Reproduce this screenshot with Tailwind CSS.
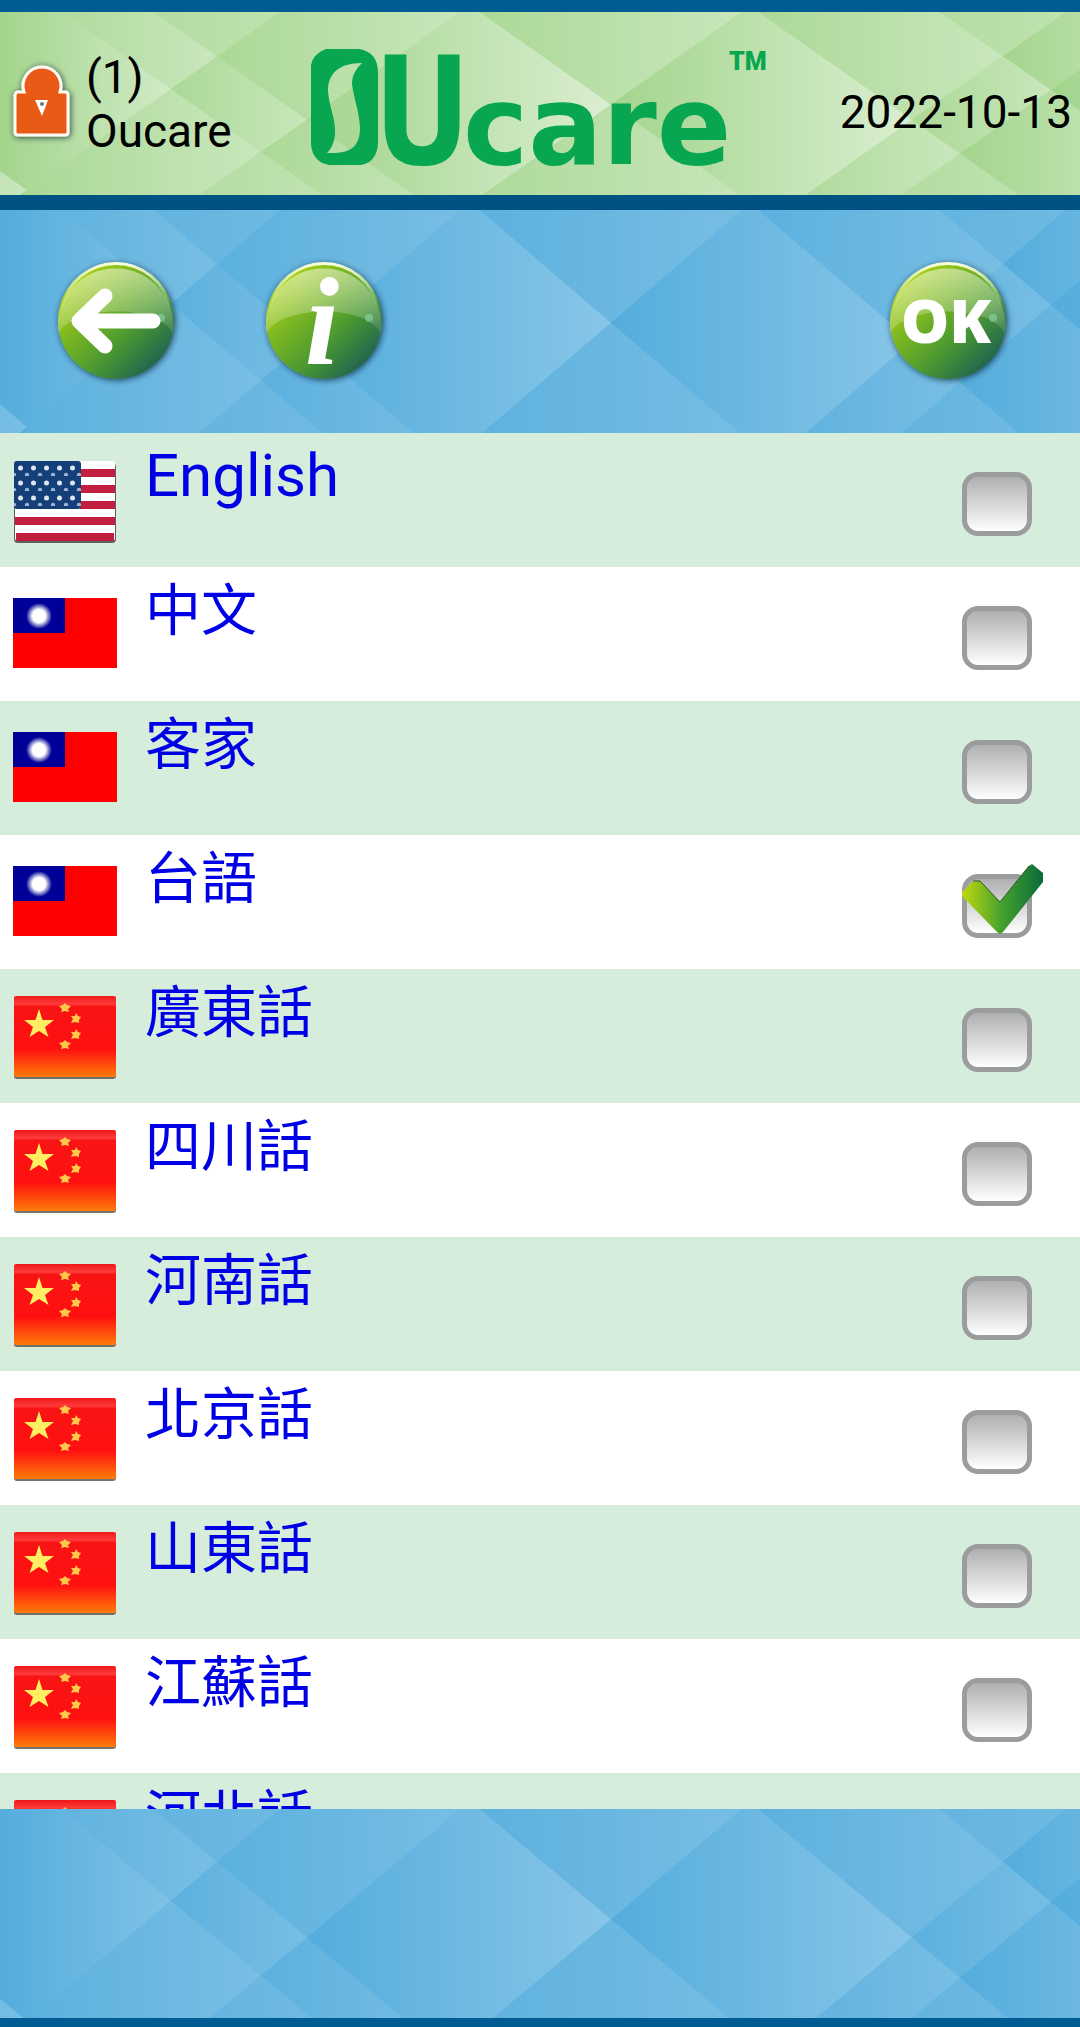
<!DOCTYPE html>
<html lang="zh-Hant">
<head>
<meta charset="utf-8">
<meta name="viewport" content="width=device-width, initial-scale=1">
<title>Oucare</title>
<script src="https://cdn.jsdelivr.net/npm/@tailwindcss/browser@4"></script>
</head>
<body class="flex h-screen flex-col overflow-hidden bg-white font-[Roboto,'Noto_Sans_CJK_TC',sans-serif] text-black">

<!-- Shared drawings -->
<svg class="absolute size-0" aria-hidden="true">
  <defs>
    <linearGradient id="wide"><stop offset="0" stop-color="#fff" stop-opacity="0"/><stop offset="1" stop-color="#fff"/></linearGradient>
    <linearGradient id="narrow"><stop offset="0" stop-color="#fff" stop-opacity=".15"/><stop offset="1" stop-color="#fff" stop-opacity=".7"/></linearGradient>
    <linearGradient id="edge" gradientUnits="userSpaceOnUse" x1="0" y1="0" x2="171" y2="0"><stop offset="0" stop-color="#fff" stop-opacity="0"/><stop offset="1" stop-color="#fff" stop-opacity=".85"/></linearGradient>
    <linearGradient id="glass" x1="0" y1="0" x2="1" y2="1"><stop offset=".15" stop-color="#a6d016"/><stop offset=".6" stop-color="#4c9a30"/><stop offset=".88" stop-color="#1f6152"/></linearGradient>
    <linearGradient id="shine" x1=".4" y1="0" x2=".6" y2="1"><stop offset="0" stop-color="#fff" stop-opacity=".5"/><stop offset="1" stop-color="#fff" stop-opacity=".12"/></linearGradient>
    <linearGradient id="rim" x1="0" y1="0" x2="0" y2="1"><stop offset="0" stop-color="#f8ffd8"/><stop offset="1" stop-color="#f8ffd8" stop-opacity="0"/></linearGradient>
    <linearGradient id="cnred" x1="0" y1="0" x2="0" y2="1"><stop offset="0" stop-color="#f01818"/><stop offset=".1" stop-color="#ff3b3b"/><stop offset=".13" stop-color="#f81414"/><stop offset=".65" stop-color="#ff1010"/><stop offset="1" stop-color="#ff7c08"/></linearGradient>
    <linearGradient id="tick" x1="0" y1="0" x2="1" y2="0"><stop offset="0" stop-color="#c0d810"/><stop offset=".5" stop-color="#43a02e"/><stop offset="1" stop-color="#0a6b3a"/></linearGradient>
    <radialGradient id="sun"><stop offset=".5" stop-color="#fff"/><stop offset="1" stop-color="#fff" stop-opacity="0"/></radialGradient>
    <pattern id="stars" width="13" height="15" patternUnits="userSpaceOnUse" x="1" y="1"><circle cx="6.500" cy="7" r="2.500" fill="#dde6f2"/><circle cx="0" cy="14" r="2.200" fill="#9fb4d4"/><circle cx="13" cy="14" r="2.200" fill="#9fb4d4"/></pattern>
    <filter id="drop" x="-20%" y="-20%" width="140%" height="150%"><feDropShadow dx="1" dy="1" stdDeviation="3" flood-color="#123" flood-opacity=".8"/></filter>

    <symbol id="diamonds" viewBox="0 0 1080 190" preserveAspectRatio="none">
      <polygon fill="url(#edge)" points="-113,82 31,-23 171,80 27,185"/>
      <polygon fill="url(#narrow)" points="27,185 171,80 261,145 117,250"/>
      <polygon fill="url(#narrow)" points="-113,82 27,185 -113,280"/>
      <polygon fill="url(#edge)" points="27,185 117,250 -20,250"/>
      <polygon fill="url(#narrow)" points="117,250 261,145 402,248 258,353"/>
      <polygon fill="url(#narrow)" points="31,-23 77,-56 217,46 171,80"/>
      <polygon fill="url(#narrow)" points="171,80 217,46 307,112 261,145"/>
      <polygon fill="url(#narrow)" points="261,145 307,112 448,215 402,248"/>
      <polygon fill="url(#narrow)" points="77,-56 240,-175 380,-73 217,46"/>
      <polygon fill="url(#narrow)" points="217,46 380,-73 470,-7 307,112"/>
      <polygon fill="url(#wide)" points="307,112 470,-7 611,96 448,215"/>
      <polygon fill="url(#narrow)" points="448,215 611,96 773,214 610,333"/>
      <polygon fill="url(#narrow)" points="470,-7 609,-109 750,-6 611,96"/>
      <polygon fill="url(#wide)" points="611,96 750,-6 912,112 773,214"/>
      <polygon fill="url(#narrow)" points="773,214 912,112 960,147 821,249"/>
      <polygon fill="url(#narrow)" points="821,249 960,147 1129,271 990,372"/>
      <polygon fill="url(#narrow)" points="750,-6 841,-72 1003,46 912,112"/>
      <polygon fill="url(#narrow)" points="912,112 1003,46 1051,81 960,147"/>
      <polygon fill="url(#wide)" points="960,147 1051,81 1220,204 1129,271"/>
      <polygon fill="url(#narrow)" points="841,-72 1021,-204 1183,-86 1003,46"/>
      <polygon fill="url(#wide)" points="1003,46 1183,-86 1231,-51 1051,81"/>
      <polygon fill="url(#wide)" points="1051,81 1231,-51 1400,73 1220,204"/>
    </symbol>

    <symbol id="orb" viewBox="0 0 136 136">
      <circle cx="68" cy="67" r="58" fill="url(#glass)" filter="url(#drop)"/>
      <path d="M10 80A58 58 0 1 1 125 80C113 50 24 50 10 80Z" fill="url(#shine)"/>
      <path d="M14 54A55 55 0 0 1 122 54" fill="none" stroke="url(#rim)" stroke-width="3"/>
      <circle cx="113" cy="64" r="4" fill="#8fe0b0" opacity=".5"/>
    </symbol>

    <symbol id="us" viewBox="0 0 104 84">
      <rect x="1" y="3" width="102" height="80" rx="4" fill="#3a3035" opacity=".75"/>
      <rect x="2" y="1" width="100" height="80" rx="3" fill="#fff"/>
      <path stroke="#c01f40" stroke-width="8" d="M67 13H102M67 29H102M67 45H102M2 61H102M3 77H101"/>
      <rect x="1" y="1" width="67" height="48" rx="3" fill="#143f78"/>
      <rect x="1" y="1" width="67" height="48" fill="url(#stars)"/>
    </symbol>
    <symbol id="tw" viewBox="0 0 104 84">
      <rect y="4" width="104" height="70" fill="#fe0000"/>
      <rect y="4" width="52" height="35" fill="#000098"/>
      <circle cx="26" cy="22" r="13" fill="url(#sun)"/>
    </symbol>
    <symbol id="cn" viewBox="0 0 104 84">
      <rect x="1" y="3" width="102" height="80" rx="3" fill="#55504a" opacity=".8"/>
      <rect x="1" y="0" width="102" height="81" rx="2" fill="url(#cnred)"/>
      <path fill="#ffee62" d="M26 13L29.500 24H41L32 31L35.500 41L26 35L16.500 41L20 31L11 24H22.500Z"/>
      <g fill="#ffc84a"><path d="M52 7l2 2 4 1-3 3 1 3-4-1-4 1 1-3-3-3 4-1Z"/><path d="M63 17l2 3 3 1-2 3 0 3-4-1-4 1 2-4-2-3 4 0Z"/><path d="M63 33l2 3 3 1-2 3 0 3-4-1-4 1 2-4-2-3 4 0Z"/><path d="M52 44l2 2 4 1-3 3 1 3-4-1-4 1 1-3-3-3 4-1Z"/></g>
    </symbol>
  </defs>
</svg>

<header class="relative flex h-[210px] shrink-0 items-center justify-between overflow-hidden border-t-[12px] border-b-[15px] border-t-[#005c92] border-b-[#005283] bg-[#a3d58c] px-2">
  <svg class="absolute inset-0 size-full opacity-60" aria-hidden="true"><use href="#diamonds" width="100%" height="100%"/></svg>
  <div class="relative flex flex-1 items-center gap-4">
    <svg class="h-[88px] w-[62px] overflow-visible" viewBox="8 60 62 88" role="img" aria-label="Locked">
      <g filter="url(#drop)">
        <path d="M16 93Q16 92 18 92H24A19 19 0 1 1 60 92H65Q68 92 68 95V132Q68 135 65 135H18Q15 135 15 132V95Z" fill="#e85a14" stroke="#fffaf4" stroke-width="3"/>
      </g>
      <path d="M35 100H48L42 116Z" fill="#fff"/><circle cx="42" cy="104" r="2" fill="#777"/>
    </svg>
    <p class="text-[46px] leading-[54px]">(1)<br>Oucare</p>
  </div>
  <svg class="relative mt-2 h-[130px] w-[460px] overflow-visible" viewBox="312 44 460 130" role="img" aria-label="OUcare" fill="#08a650">
    <path fill-rule="evenodd" d="M328 50H361Q380 53 380 74V144Q379 163 363 166H331Q315 163 313 146V66Q315 55 328 50ZM364 64C340 64 330 75 330 92C331 108 338 120 337 135C336 145 333 150 329 154C353 155 362 148 362 128C361 112 356 100 354 85C354 76 358 70 364 64Z"/>
    <text x="379" y="165" font-family="DejaVu Sans Mono" font-weight="700" font-size="150">U</text>
    <text x="465" y="165" font-family="DejaVu Sans" font-weight="700" font-size="110">care</text>
    <text x="731" y="71" font-family="Roboto" font-weight="900" font-size="25">TM</text>
  </svg>
  <time datetime="2022-10-13" class="relative mt-4 flex-1 text-right text-[46px] leading-[54px]">2022-10-13</time>
</header>

<nav class="relative flex h-[223px] shrink-0 items-center overflow-hidden bg-[#54addd] pr-16 pl-12">
  <svg class="absolute inset-0 size-full opacity-30" aria-hidden="true"><use href="#diamonds" width="100%" height="100%"/></svg>
  <button type="button" aria-label="Back" class="relative size-[136px]">
    <svg class="size-full" viewBox="0 0 136 136"><use href="#orb"/>
      <path d="M57 42L31 67L57 92M34 67H105" fill="none" stroke="#fff" stroke-width="15" stroke-linecap="round" stroke-linejoin="round"/></svg>
  </button>
  <button type="button" aria-label="Information" class="relative ml-[72px] size-[136px]">
    <svg class="size-full overflow-visible" viewBox="0 0 136 136"><use href="#orb"/>
      <text x="66" y="110" text-anchor="middle" font-family="Liberation Serif" font-style="italic" font-weight="700" font-size="124" fill="#fff">i</text></svg>
  </button>
  <button type="button" class="relative ml-auto size-[136px]">
    <svg class="size-full" viewBox="0 0 136 136"><use href="#orb"/>
      <text x="66" y="89" text-anchor="middle" font-family="Open Sans" font-weight="800" font-size="61" fill="#fff">OK</text></svg>
  </button>
</nav>

<main class="min-h-0 flex-1 overflow-y-auto [scrollbar-width:none]">
  <ul id="languages"></ul>
</main>

<footer class="relative h-[218px] shrink-0 overflow-hidden border-b-[9px] border-[#005c92] bg-[#54addd]">
  <svg class="absolute inset-x-0 top-0 h-[218px] w-full opacity-30" aria-hidden="true"><use href="#diamonds" width="100%" height="100%"/></svg>
</footer>

<template id="row">
  <li class="odd:bg-[#d6eddc] even:bg-white">
    <label class="flex h-[134px] items-start pr-12 pl-[13px]">
      <svg class="mt-[27px] h-[84px] w-[104px] shrink-0" aria-hidden="true"><use/></svg>
      <span class="mt-1 ml-7 flex-1 text-[#0000e6]"></span>
      <span class="relative mt-[39px] block h-16 w-[70px]">
        <input type="checkbox" class="peer block h-16 w-[70px] appearance-none rounded-2xl border-[5px] border-[#9b9c9e] bg-linear-to-b from-[#b0b0b3] to-white">
        <svg class="pointer-events-none absolute -top-[10px] left-0 hidden h-[70px] w-[81px] peer-checked:block" viewBox="0 0 81 70" aria-hidden="true">
          <path d="M0 28L11 17H18L38 38L67 2L70 0L81 9V18L41 68Q38 71 35 68L0 32Z" fill="url(#tick)"/>
          <path d="M11 17H18L38 38L67 2" fill="none" stroke="#2c5a1a" stroke-width="1"/>
        </svg>
      </span>
    </label>
  </li>
</template>

<script>
  const languages = [
    ['us', 'English'], ['tw', '中文'], ['tw', '客家'], ['tw', '台語', true],
    ['cn', '廣東話'], ['cn', '四川話'], ['cn', '河南話'], ['cn', '北京話'],
    ['cn', '山東話'], ['cn', '江蘇話'], ['cn', '河北話']
  ];
  const styles = {
    latin: ['text-[60px]', 'leading-[78px]'],
    chinese: ['text-[56px]', 'leading-[80px]']
  };
  const list = document.getElementById('languages');
  for (const [flag, name, checked] of languages) {
    const row = document.getElementById('row').content.cloneNode(true);
    row.querySelector('use').setAttribute('href', '#' + flag);
    const text = row.querySelector('span');
    text.textContent = name;
    text.classList.add(...(flag === 'us' ? styles.latin : styles.chinese));
    row.querySelector('input').checked = Boolean(checked);
    list.append(row);
  }
</script>
</body>
</html>
